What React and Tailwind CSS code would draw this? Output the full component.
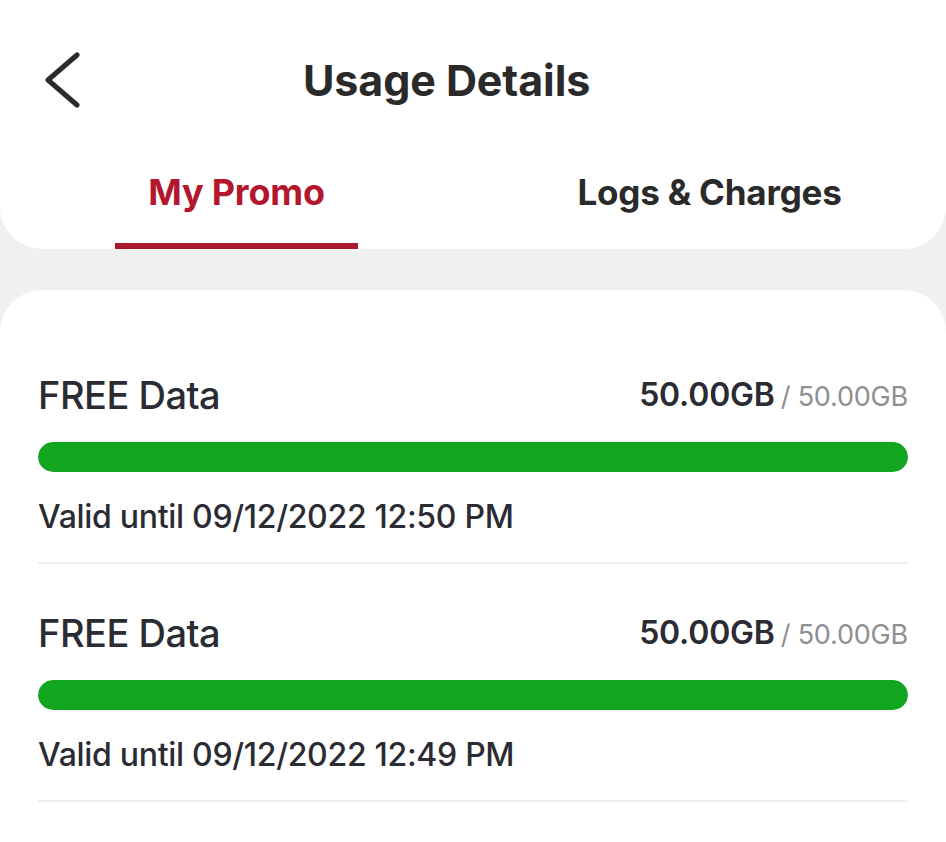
const promos = [
  { name: "FREE Data", used: "50.00GB", total: "50.00GB", pct: 100, valid: "Valid until 09/12/2022 12:50 PM" },
  { name: "FREE Data", used: "50.00GB", total: "50.00GB", pct: 100, valid: "Valid until 09/12/2022 12:49 PM" },
]

const PromoItem = ({ item }) => (
  <div className="pt-[49px] pb-[25px] border-b-2 border-[#efefef]">
    <div className="h-[40px] flex items-center justify-between">
      <span className="text-[38px] font-medium text-[#2b2b33] tracking-[-0.5px]">{item.name}</span>
      <span className="flex items-baseline">
        <span className="text-[32px] font-semibold text-[#2b2b33] tracking-[-0.2px]">{item.used}</span>
        <span className="text-[27px] text-[#8e8e93] ml-[6px] tracking-[-0.2px]">/ {item.total}</span>
      </span>
    </div>
    <div className="mt-[27px] h-[30px] rounded-full bg-[#e8e8e8] overflow-hidden">
      <div className="h-full rounded-full bg-[#12a520]" style={{ width: `${item.pct}%` }} />
    </div>
    <div className="mt-[25px] h-[40px] flex items-center">
      <span className="text-[32px] font-medium text-[#2b2b33] tracking-[-0.3px]">{item.valid}</span>
    </div>
  </div>
)

export default function App() {
  return (
    <div className="min-h-screen bg-[#f0f0f0] font-['Inter',sans-serif]">
      <header className="bg-white rounded-b-[42px] h-[249px] flex flex-col">
        <div className="h-[160px] flex items-center pl-[44px]">
          <svg width="38" height="56" viewBox="0 0 38 56" fill="none">
            <polyline points="33,3 4,28 33,53" stroke="#2a2a2a" strokeWidth="5" strokeLinecap="round" strokeLinejoin="round" />
          </svg>
          <h1 className="ml-[221px] text-[43px] font-bold text-[#2a2a2a] tracking-[-0.1px]">Usage Details</h1>
        </div>
        <div className="grid grid-cols-2 flex-1">
          <button className="flex flex-col items-center">
            <span className="mt-[12px] h-[40px] flex items-center text-[36px] font-bold text-[#b3172d] tracking-[-0.2px]">My Promo</span>
            <span className="mt-auto w-[243px] h-[6px] bg-[#a8192e]" />
          </button>
          <button className="flex flex-col items-center">
            <span className="mt-[12px] h-[40px] flex items-center text-[35px] font-bold text-[#2a2a2a] tracking-[-0.2px]">Logs &amp; Charges</span>
          </button>
        </div>
      </header>
      <main className="mt-[41px] bg-white rounded-t-[42px] min-h-[552px] px-[38px] pt-[36px]">
        {promos.map((item, index) => (
          <PromoItem key={index} item={item} />
        ))}
      </main>
    </div>
  )
}
